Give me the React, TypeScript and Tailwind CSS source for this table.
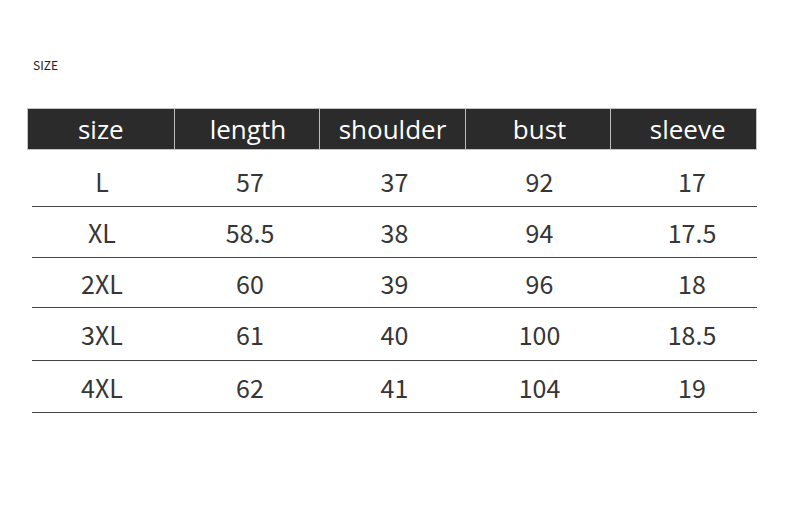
const headers = ["size", "length", "shoulder", "bust", "sleeve"];

const rows = [
  ["L", "57", "37", "92", "17"],
  ["XL", "58.5", "38", "94", "17.5"],
  ["2XL", "60", "39", "96", "18"],
  ["3XL", "61", "40", "100", "18.5"],
  ["4XL", "62", "41", "104", "19"],
];

// row heights read off the chart, they aren't quite even
const rowHeights = ["h-[51px]", "h-[51px]", "h-[50px]", "h-[53px]", "h-[52px]"];
const cellPad = ["pr-[5px]", "pl-[1px]", "", "", "pl-[15px]"];
const headPad = ["", "pl-[2px]", "", "pl-[3px]", "pl-[8px]"];

const App = () => {
  return (
    <div className="h-[532px] w-[790px] bg-white pt-[57px] font-['Noto_Sans_CJK_SC','Noto_Sans',sans-serif]">
      <div className="pl-[33px] text-[12px] leading-[16px] text-[#222]">SIZE</div>
      <div className="ml-[27px] mt-[35px] w-[730px]">
        <div className="grid h-[42px] grid-cols-5 border border-[#c4c4c4] bg-[#2b2b2b]">
          {headers.map((h, i) => (
            <div
              key={h}
              className={
                "flex items-center justify-center pb-[1px] font-['Open_Sans',sans-serif] text-[26px] leading-none text-white " +
                headPad[i] +
                (i > 0 ? " border-l border-[#bdbdbd]" : "")
              }
            >
              {h}
            </div>
          ))}
        </div>
        <div className="ml-[5px] mt-[6px]">
          {rows.map((r, ri) => (
            <div
              key={r[0]}
              className={
                "grid grid-cols-5 border-b border-[#444] text-[25px] leading-none text-[#363636] " +
                rowHeights[ri]
              }
            >
              {r.map((c, ci) => (
                <div key={ci} className={"flex items-center justify-center pt-[1px] " + cellPad[ci]}>
                  {c}
                </div>
              ))}
            </div>
          ))}
        </div>
      </div>
    </div>
  );
};

export default App;
